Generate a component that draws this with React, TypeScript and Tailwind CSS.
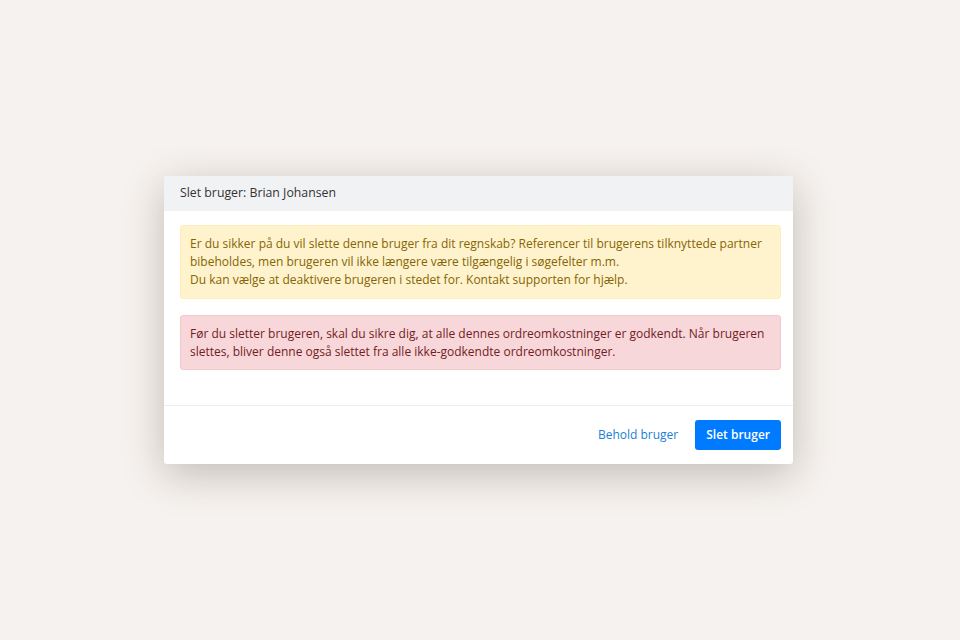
import * as React from 'react';

export default function App() {
    return (
        <div
            className="w-[960px] h-[640px] bg-[#f6f2ef] flex items-start justify-start pl-[164px] pt-[176px]"
            style={{ fontFamily: '"Open Sans", "Noto Sans", sans-serif' }}
        >
            <div className="w-[629px] bg-white rounded-[3px] shadow-[0_10px_40px_rgba(60,45,30,0.28)] overflow-hidden">
                {/* Header */}
                <div className="h-[35px] bg-[#f1f2f4] pl-[16px] pr-[12px] flex items-center text-[12.3px] text-[#333]">
                    Slet bruger: Brian Johansen
                </div>

                {/* Body */}
                <div className="pl-[16px] pr-[12px] pt-[14px] pb-[35px] flex flex-col gap-[16px]">
                    <div className="bg-[#fff3cd] border border-[#ffeeba] rounded-[3px] px-[9px] py-[9px] text-[12px] leading-[18px] text-[#856404]">
                        Er du sikker på du vil slette denne bruger fra dit regnskab? Referencer til brugerens tilknyttede partner bibeholdes, men brugeren vil ikke længere være tilgængelig i søgefelter m.m.
                        <br />
                        Du kan vælge at deaktivere brugeren i stedet for. Kontakt supporten for hjælp.
                    </div>
                    <div className="bg-[#f8d7da] border border-[#f5c6cb] rounded-[3px] px-[9px] py-[8.5px] text-[12px] leading-[18px] text-[#721c24]">
                        Før du sletter brugeren, skal du sikre dig, at alle dennes ordreomkostninger er godkendt. Når brugeren slettes, bliver denne også slettet fra alle ikke-godkendte ordreomkostninger.
                    </div>
                </div>

                {/* Footer */}
                <div className="border-t border-[#eceef0] h-[59px] pl-[16px] pr-[12px] flex items-center justify-end gap-[17px]">
                    <button className="text-[12px] text-[#1a7fd4]">Behold bruger</button>
                    <button className="h-[30px] px-[11px] rounded-[3px] bg-[#007bff] text-white text-[12px] font-semibold">
                        Slet bruger
                    </button>
                </div>
            </div>
        </div>
    );
}
